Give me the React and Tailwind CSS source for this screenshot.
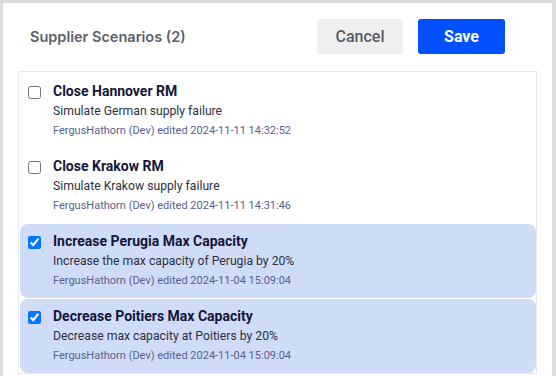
import React from "react";

const rows = [
  { title: "Close Hannover RM", desc: "Simulate German supply failure", meta: "FergusHathorn (Dev) edited 2024-11-11 14:32:52", checked: false },
  { title: "Close Krakow RM", desc: "Simulate Krakow supply failure", meta: "FergusHathorn (Dev) edited 2024-11-11 14:31:46", checked: false },
  { title: "Increase Perugia Max Capacity", desc: "Increase the max capacity of Perugia by 20%", meta: "FergusHathorn (Dev) edited 2024-11-04 15:09:04", checked: true },
  { title: "Decrease Poitiers Max Capacity", desc: "Decrease max capacity at Poitiers by 20%", meta: "FergusHathorn (Dev) edited 2024-11-04 15:09:04", checked: true },
];

export default function App() {
  return (
    <div className="h-[376px] w-[556px] overflow-hidden bg-[#dcdce0] pt-[3px] pl-[3px] pr-[4px]">
      <div className="h-full bg-white">
        <div className="flex items-center pt-[16px] pl-[27px] pr-[47px]">
          <div className="flex-1 pt-[1px] text-[14.5px] font-semibold text-[#5b5e6b]" style={{ fontFamily: "Inter, 'Liberation Sans', sans-serif" }}>
            Supplier Scenarios (2)
          </div>
          <button className="h-[35px] w-[86px] rounded-[3px] bg-[#efefef] text-[16px] font-medium text-[#555a66]" style={{ fontFamily: "Roboto, sans-serif" }}>
            Cancel
          </button>
          <button className="ml-[15px] h-[35px] w-[87px] rounded-[3px] bg-[#0050ff] text-[16px] font-bold text-white" style={{ fontFamily: "Roboto, sans-serif" }}>
            Save
          </button>
        </div>
        <div className="mx-[15px] mt-[17px] flex flex-col gap-[1px] border border-[#e8e9ed] pt-[2px] pl-[1px]" style={{ fontFamily: "Roboto, sans-serif" }}>
          {rows.map((r) => (
            <div key={r.title} className={`flex h-[74px] rounded-[8px] pl-[8px] pt-[7px] ${r.checked ? "bg-[#cfdcf7]" : ""}`}>
              <input type="checkbox" defaultChecked={r.checked} className="m-0 mt-[5px] h-[13px] w-[13px]" />
              <div className="ml-[12px] flex flex-col">
                <div className="text-[14px] leading-[20px] font-bold text-[#12163a]">{r.title}</div>
                <div className="text-[12.2px] leading-[20px] text-[#2d3142]">{r.desc}</div>
                <div className="text-[11px] leading-[20px] text-[#5a6090]">{r.meta}</div>
              </div>
            </div>
          ))}
        </div>
      </div>
    </div>
  );
}
